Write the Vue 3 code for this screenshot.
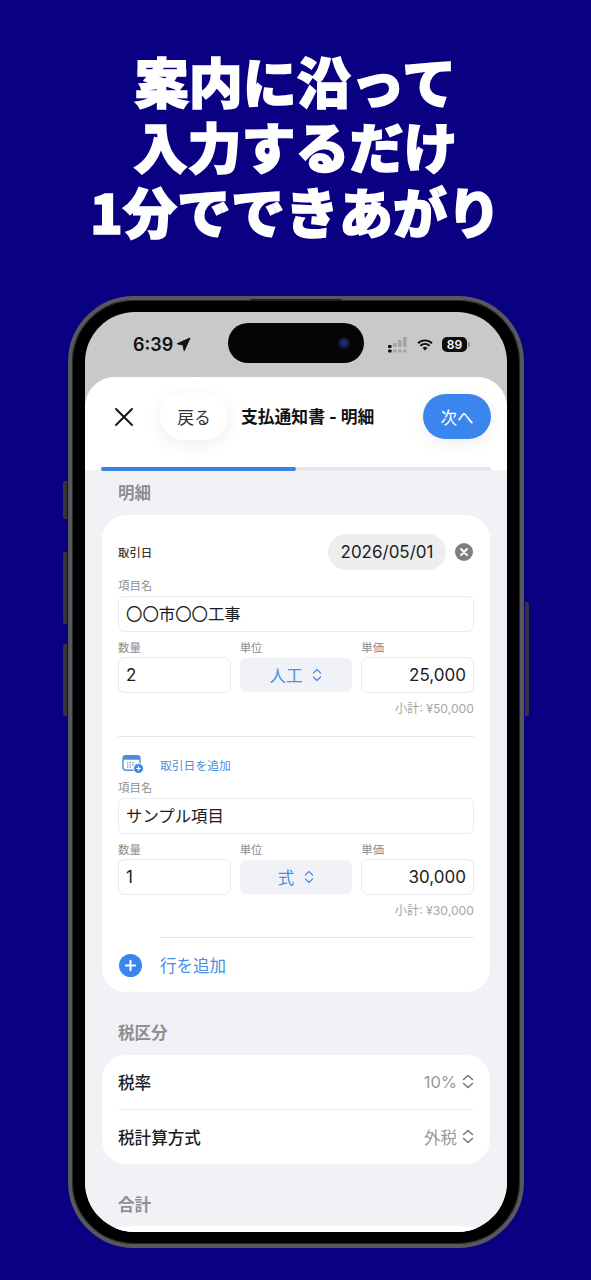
<script setup>
const items = [
  { name: '〇〇市〇〇工事', qty: '2', unit: '人工', price: '25,000', subtotal: '¥50,000' },
  { name: 'サンプル項目', qty: '1', unit: '式', price: '30,000', subtotal: '¥30,000' }
]

const taxRows = [
  { label: '税率', value: '10%' },
  { label: '税計算方式', value: '外税' }
]

const signalBars = [
  { x: 0, y: 8, h: 3, on: true },
  { x: 0, y: 12.5, h: 3, on: true },
  { x: 5, y: 6, h: 4, on: false },
  { x: 5, y: 12.5, h: 3, on: false },
  { x: 10, y: 3, h: 7, on: false },
  { x: 10, y: 12.5, h: 3, on: false },
  { x: 15, y: 0, h: 10, on: false },
  { x: 15, y: 12.5, h: 3, on: false }
]
</script>

<template>
  <div class="page">
    <h1 class="headline">
      <span>案内に沿って</span>
      <span>入力するだけ</span>
      <span>1分でできあがり</span>
    </h1>

    <div class="phone">
      <i class="side-btn left b1"></i>
      <i class="side-btn left b2"></i>
      <i class="side-btn left b3"></i>
      <i class="side-btn right b4"></i>
      <i class="speaker"></i>

      <div class="bezel">
        <div class="screen">
          <div class="island"><span class="lens"></span></div>

          <div class="status">
            <span class="time">6:39</span>
            <svg class="loc" width="15" height="15" viewBox="0 0 15 15">
              <path d="M14 1 1.200 6.800 7 8 8.200 13.800Z" fill="#111" stroke="#111" stroke-width="1" stroke-linejoin="round" />
            </svg>
            <svg class="signal" width="20" height="16" viewBox="0 0 20 16">
              <rect v-for="(b, i) in signalBars" :key="i" :x="b.x" :y="b.y" width="3.6" :height="b.h" rx="1" :fill="b.on ? '#111' : '#a4a4a4'" />
            </svg>
            <svg class="wifi" width="16" height="12" viewBox="0 0 16 12">
              <path d="M1 4.200a10 10 0 0 1 14 0M3.400 6.700a6.600 6.600 0 0 1 9.200 0" fill="none" stroke="#111" stroke-width="1.900" />
              <path d="M5.600 9a3.400 3.400 0 0 1 4.800 0L8 11.600Z" fill="#111" />
            </svg>
            <span class="battery">89</span>
            <i class="battery-nub"></i>
          </div>

          <div class="sheet">
            <div class="sheet-head">
              <svg class="close" width="20" height="20" viewBox="0 0 20 20">
                <path d="M2 2 18 18M18 2 2 18" stroke="#111" stroke-width="1.900" stroke-linecap="round" />
              </svg>
              <button class="back">戻る</button>
              <span class="title">支払通知書 - 明細</span>
              <button class="next">次へ</button>
            </div>
            <div class="progress"><div class="progress-fill"></div></div>

            <div class="content">
              <div class="section-label">明細</div>
              <div class="card lines">
                <div class="date-row">
                  <span class="date-label">取引日</span>
                  <span class="date-pill">2026/05/01</span>
                  <svg class="clear" width="18" height="18" viewBox="0 0 18 18">
                    <circle cx="9" cy="9" r="9" fill="#7f7f81" />
                    <path d="M6 6 12 12M12 6 6 12" stroke="#fff" stroke-width="2" stroke-linecap="round" />
                  </svg>
                </div>

                <template v-for="(item, idx) in items" :key="idx">
                  <div v-if="idx > 0" class="add-date">
                    <svg class="cal" width="22" height="20" viewBox="0 0 22 20">
                      <rect x="1" y="1.600" width="17" height="14.600" rx="2.600" fill="none" stroke="#4a8ee0" stroke-width="1.400" />
                      <path d="M1 4.200a2.600 2.600 0 0 1 2.600-2.600h11.800a2.600 2.600 0 0 1 2.600 2.600v1.600H1Z" fill="#4a8ee0" />
                      <path d="M5 8.500h8M5 10.800h8M5 13.100h5" stroke="#7f8ba0" stroke-width="1.200" stroke-dasharray="1.400 1.200" />
                      <circle cx="16.500" cy="14.500" r="5" fill="#3a86ee" stroke="#fff" stroke-width="1" />
                      <path d="M16.500 12.200v4.600M14.200 14.500h4.600" stroke="#fff" stroke-width="1.200" />
                    </svg>
                    <span>取引日を追加</span>
                  </div>

                  <div class="field-label">項目名</div>
                  <div class="input name">{{ item.name }}</div>

                  <div class="cols">
                    <div class="col">
                      <div class="field-label">数量</div>
                      <div class="input num">{{ item.qty }}</div>
                    </div>
                    <div class="col">
                      <div class="field-label">単位</div>
                      <div class="unit">
                        {{ item.unit }}
                        <svg width="10" height="14" viewBox="0 0 10 14">
                          <path d="M1.500 5 5 1.500 8.500 5M1.500 9 5 12.500 8.500 9" fill="none" stroke="#4a8ee0" stroke-width="1.200" stroke-linecap="round" stroke-linejoin="round" />
                        </svg>
                      </div>
                    </div>
                    <div class="col">
                      <div class="field-label">単価</div>
                      <div class="input num price">{{ item.price }}</div>
                    </div>
                  </div>

                  <div class="subtotal">小計: {{ item.subtotal }}</div>
                  <div class="divider" :class="{ inset: idx === items.length - 1 }"></div>
                </template>

                <div class="add-row">
                  <svg width="23" height="23" viewBox="0 0 23 23">
                    <circle cx="11.500" cy="11.500" r="11.500" fill="#3a86ee" />
                    <path d="M11.500 6.800v9.400M6.800 11.500h9.400" stroke="#fff" stroke-width="2" stroke-linecap="round" />
                  </svg>
                  <span>行を追加</span>
                </div>
              </div>

              <div class="section-label tax-label">税区分</div>
              <div class="card tax">
                <div v-for="row in taxRows" :key="row.label" class="tax-row">
                  <span class="tax-name">{{ row.label }}</span>
                  <span class="tax-value">
                    {{ row.value }}
                    <svg width="12" height="15" viewBox="0 0 12 15">
                      <path d="M1.500 5.500 6 1.500 10.500 5.500M1.500 9.500 6 13.500 10.500 9.500" fill="none" stroke="#6d6d70" stroke-width="1.300" stroke-linecap="round" stroke-linejoin="round" />
                    </svg>
                  </span>
                </div>
              </div>

              <div class="section-label total-label">合計</div>
              <div class="card total"></div>
            </div>
          </div>
        </div>
      </div>
    </div>
  </div>
</template>

<style>
body {
  background: #0a0082;
}
</style>

<style scoped>
.page {
  width: 591px;
  height: 1280px;
  overflow: hidden;
  background: #0a0082;
  font-family: Inter, "Noto Sans CJK JP", sans-serif;
  padding-top: 48px;
  box-sizing: border-box;
}

.headline {
  margin: 0;
  display: flex;
  flex-direction: column;
  align-items: center;
  color: #fff;
  font-family: "Noto Sans CJK JP", sans-serif;
  font-size: 54px;
  font-weight: 900;
  line-height: 65px;
  -webkit-text-stroke: 1.5px #fff;
}

.phone {
  position: relative;
  width: 456px;
  height: 952px;
  margin: 53px 0 0 68px;
}

.side-btn {
  position: absolute;
  width: 4px;
  background: #34343a;
}
.side-btn.left { left: -5px; border-radius: 2px 0 0 2px; }
.side-btn.right { right: -5px; border-radius: 0 2px 2px 0; }
.b1 { top: 185px; height: 38px; }
.b2 { top: 256px; height: 72px; }
.b3 { top: 348px; height: 72px; }
.b4 { top: 306px; height: 114px; }

.speaker {
  position: absolute;
  z-index: 2;
  top: 3px;
  left: 182px;
  width: 92px;
  height: 2px;
  background: #222;
}

.bezel {
  width: 100%;
  height: 100%;
  box-sizing: border-box;
  padding: 12px 13px;
  background: #000;
  border: 4px solid #58585c;
  border-radius: 66px;
  box-shadow: inset 0 0 0 1px #2a2a2d;
}

.screen {
  position: relative;
  height: 100%;
  overflow: hidden;
  background: #c9c9c9;
  border-radius: 50px;
}

.island {
  position: absolute;
  top: 11px;
  left: 143px;
  width: 136px;
  height: 40px;
  background: #050507;
  border-radius: 20px;
}
.lens {
  position: absolute;
  top: 14px;
  right: 14px;
  width: 12px;
  height: 12px;
  border-radius: 50%;
  background: radial-gradient(#1f2f6e 20%, #0b0d26 70%);
}

.status {
  height: 65px;
  display: flex;
  align-items: center;
  color: #111;
}
.time {
  margin-left: 48px;
  font-size: 18px;
  font-weight: 600;
  width: 40px;
}
.loc { margin-left: 3px; }
.signal { margin-left: 197px; }
.wifi { margin-left: 9px; }
.battery {
  margin-left: 9px;
  width: 25px;
  height: 15px;
  background: #0d0d0d;
  border-radius: 5px;
  color: #fff;
  font-size: 12px;
  font-weight: 600;
  line-height: 15px;
  text-align: center;
}
.battery-nub {
  width: 2px;
  height: 5px;
  margin-left: 1px;
  background: #8e8e8e;
  border-radius: 0 2px 2px 0;
}

.sheet {
  background: #f1f1f6;
  border-radius: 30px 30px 0 0;
  overflow: hidden;
}
.sheet-head {
  height: 90px;
  box-sizing: border-box;
  padding: 16px 16px 0 29px;
  display: flex;
  align-items: flex-start;
  background: #fff;
}
.close {
  margin: 14px 0 0;
  flex-shrink: 0;
}
.back {
  width: 68px;
  height: 47px;
  margin-left: 26px;
  border: none;
  border-radius: 24px;
  background: #fff;
  box-shadow: 0 4px 18px rgba(0, 0, 0, 0.07);
  color: #333;
  font: 400 16.800px "Noto Sans CJK JP", sans-serif;
}
.title {
  margin: 12px 0 0 13px;
  font-size: 16.800px;
  font-weight: 700;
  line-height: 24px;
  color: #111;
}
.next {
  width: 68px;
  height: 45px;
  margin: 1px 0 0 auto;
  border: none;
  border-radius: 23px;
  background: #3a86ee;
  box-shadow: 0 4px 18px rgba(0, 0, 0, 0.07);
  color: #fff;
  font: 400 16.500px "Noto Sans CJK JP", sans-serif;
}

.progress {
  padding: 0 16px;
  height: 4px;
  overflow: hidden;
  background: linear-gradient(#fff, #fff 3px, #f1f1f6 3px);
}
.progress-fill {
  width: 195px;
  height: 4px;
  background: #3b82e8;
  border-radius: 2px;
  box-shadow: 195px 0 0 0 #e5e5ea;
}

.content {
  padding: 12px 17px 0;
}
.section-label {
  height: 20px;
  padding-left: 16px;
  margin-bottom: 12px;
  font-size: 16.500px;
  font-weight: 700;
  line-height: 20px;
  color: #8e8e93;
}
.tax-label { margin-top: 31px; }
.total-label { margin-top: 31px; margin-bottom: 11px; }

.card {
  background: #fff;
  border-radius: 24px;
  width: 388px;
}
.lines {
  height: 477px;
  box-sizing: border-box;
  padding: 19px 16px 0;
}
.date-row {
  height: 36px;
  display: flex;
  align-items: center;
  margin-bottom: 8px;
}
.date-label {
  font-size: 11.400px;
  color: #333;
  font-weight: 500;
}
.date-pill {
  margin-left: auto;
  width: 118px;
  height: 36px;
  border-radius: 18px;
  background: #eeeef0;
  font-size: 17px;
  line-height: 36px;
  text-align: center;
  color: #1c1c1e;
}
.clear { margin: 0 1px 0 9px; }

.field-label {
  height: 16px;
  font-size: 11.400px;
  line-height: 16px;
  color: #8d8d90;
}
.input {
  height: 36px;
  margin-top: 1px;
  box-sizing: border-box;
  padding: 0 7px;
  border: 1px solid #ebebef;
  border-radius: 6px;
  background: #fff;
  font-size: 16.400px;
  line-height: 34px;
  color: #1c1c1e;
}
.input.num {
  font-size: 17px;
}
.input.name {
  margin: 2px 0 8px;
}
.cols {
  display: grid;
  grid-template-columns: repeat(3, 1fr);
  gap: 9px;
}
.price { text-align: right; }
.unit {
  height: 34px;
  margin-top: 2px;
  display: flex;
  align-items: center;
  justify-content: center;
  gap: 10px;
  border-radius: 6px;
  background: #f1f2f7;
  color: #4a8ee0;
  font-size: 16.500px;
}
.subtotal {
  height: 16px;
  margin-top: 8px;
  font-size: 12.200px;
  line-height: 16px;
  text-align: right;
  color: #a6a6a9;
}
.divider {
  height: 1px;
  margin: 19px 0 18px;
  background: #e8e8ec;
}
.divider.inset {
  margin: 18px 0 0 42px;
}
.add-date {
  height: 18px;
  display: flex;
  align-items: center;
  margin-bottom: 7px;
  color: #4a8ee0;
  font-size: 11.800px;
}
.cal { margin-left: 4px; }
.add-date span { margin-left: 16px; }
.add-row {
  height: 54px;
  display: flex;
  align-items: center;
  gap: 18px;
  padding-left: 1px;
  color: #4a8ee0;
  font-size: 16.500px;
}

.tax {
  padding: 0 16px;
  box-sizing: border-box;
}
.tax-row {
  height: 54.500px;
  display: flex;
  align-items: center;
  justify-content: space-between;
  box-sizing: border-box;
}
.tax-row:first-child {
  border-bottom: 1px solid #ececf0;
}
.tax-name {
  font-size: 16.600px;
  font-weight: 500;
  color: #1c1c1e;
}
.tax-value {
  display: flex;
  align-items: center;
  gap: 5px;
  font-size: 16.500px;
  color: #98989c;
}
.total {
  height: 80px;
}
</style>
